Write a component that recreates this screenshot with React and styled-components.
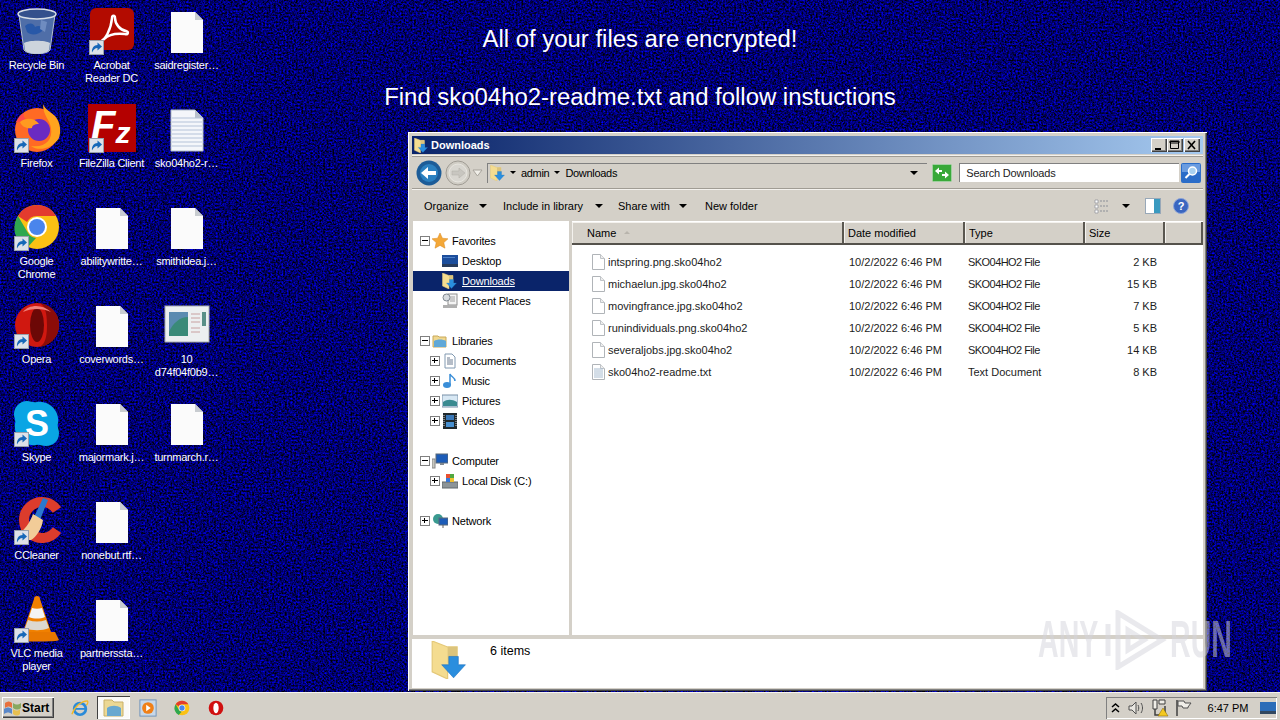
import React from 'react';
import styled, { createGlobalStyle } from 'styled-components';

const GlobalStyle = createGlobalStyle`
    html, body {
        margin: 0;
        padding: 0;
        width: 1280px;
        height: 720px;
        overflow: hidden;
        font-family: "Liberation Sans", Arial, sans-serif;
        font-size: 11px;
    }
    * { box-sizing: border-box; }
`;

const Screen = styled.div`
    width: 1280px;
    height: 720px;
    display: flex;
    flex-direction: column;
`;

const Desktop = styled.div`
    position: relative;
    height: 692px;
    background: #00006c;
    overflow: hidden;
`;

const Wallpaper = styled.svg`
    position: absolute;
    inset: 0;
`;

const IconGrid = styled.div`
    position: relative;
    margin-left: -1px;
    display: grid;
    grid-template-columns: repeat(3, 75px);
    grid-auto-rows: 98px;
`;

const Cell = styled.div`
    display: flex;
    flex-direction: column;
    align-items: center;
    padding-top: 6px;
`;

const IconBox = styled.div`
    position: relative;
    width: 48px;
    height: 48px;
    margin-bottom: 5px;
    svg { display: block; }
`;

const Badge = styled.div`
    position: absolute;
    left: 1px;
    bottom: -1px;
    width: 15px;
    height: 15px;
`;

const IconLabel = styled.div`
    width: 75px;
    color: #fff;
    text-align: center;
    line-height: 13px;
    letter-spacing: -0.25px;
    white-space: nowrap;
`;

const Banner = styled.div`
    position: absolute;
    top: 25px;
    left: 0;
    width: 1280px;
    color: #fff;
    font-size: 23.92px;
    line-height: 28px;
    text-align: center;
    display: flex;
    flex-direction: column;
    gap: 30px;
`;

const Window = styled.div`
    position: absolute;
    left: 408px;
    top: 132px;
    width: 799px;
    height: 559px;
    padding: 4px 4px 3px;
    display: flex;
    flex-direction: column;
    background: #d4d0c8;
    box-shadow: inset 1px 1px #fff, inset -1px -1px #404040, inset -2px -2px #808080;
`;

const TitleBar = styled.div`
    height: 18px;
    margin-bottom: 1px;
    padding: 0 3px 0 2px;
    display: flex;
    align-items: center;
    gap: 2px;
    color: #fff;
    font-weight: 700;
    background: linear-gradient(90deg, #0a246a, #a6caf0);
`;

const TitleText = styled.span`
    flex: 1;
`;

const CaptionBtn = styled.div`
    width: 16px;
    height: 14px;
    margin-left: ${p => p.$gap || 0}px;
    background: #d4d0c8;
    box-shadow: inset 1px 1px #fff, inset -1px -1px #404040, inset -2px -2px #808080;
    svg { display: block; }
`;

const NavBar = styled.div`
    height: 35px;
    padding: 0 2px 0 4px;
    display: flex;
    align-items: center;
    border-top: 1px solid #f4f2ee;
    border-bottom: 1px solid #f4f2ee;
    box-shadow: 0 1px #a09c94 inset, 0 -1px #a09c94 inset;
    background: #d4d0c8;
`;

const AddressBox = styled.div`
    width: 441px;
    height: 20px;
    margin-left: 4px;
    padding: 0 4px 1px 2px;
    display: flex;
    align-items: center;
    border-top: 1px solid #808080;
    border-left: 1px solid #808080;
    color: #000;
    letter-spacing: -0.3px;
`;

const Gap = styled.div`
    width: ${p => p.$w}px;
    flex: none;
`;

const SearchBox = styled.div`
    width: 220px;
    height: 19px;
    margin-left: 7px;
    padding-left: 6px;
    display: flex;
    align-items: center;
    background: #fff;
    color: #222;
    letter-spacing: -0.2px;
    border-top: 1px solid #808080;
    border-left: 1px solid #808080;
`;

const Toolbar = styled.div`
    height: 31px;
    padding-left: 12px;
    display: flex;
    align-items: center;
    color: #000;
`;

const ToolBtn = styled.div`
    width: ${p => p.$w}px;
    flex: none;
    display: flex;
    align-items: center;
    gap: ${p => p.$gap || 0}px;
`;

const Spacer = styled.div`
    flex: 1;
`;

const Arrow = styled.span`
    display: inline-block;
    width: 0;
    height: 0;
    flex: none;
    border-left: ${p => p.$s || 4}px solid transparent;
    border-right: ${p => p.$s || 4}px solid transparent;
    border-top: ${p => p.$s || 4}px solid #000;
`;

const Panes = styled.div`
    height: 414px;
    display: flex;
`;

const Sidebar = styled.div`
    width: 157px;
    margin-left: 1px;
    padding-top: 10px;
    background: #fff;
`;

const TreeRow = styled.div`
    height: 20px;
    padding-left: ${p => (p.$level ? 17 : 7)}px;
    display: flex;
    align-items: center;
    letter-spacing: -0.18px;
    color: ${p => (p.$selected ? '#fff' : '#000')};
    background: ${p => (p.$selected ? '#0a246a' : 'transparent')};
    span.label { text-decoration: ${p => (p.$selected ? 'underline' : 'none')}; }
    svg { margin: 0 4px 0 2px; flex: none; }
`;

const Expander = styled.div`
    position: relative;
    width: 10px;
    height: 10px;
    flex: none;
    ${p => !p.$empty && `
        background: #fff;
        border: 1px solid #808080;
        &::before {
            content: "";
            position: absolute;
            left: 1px;
            top: 3px;
            width: 6px;
            height: 1px;
            background: #000;
        }
    `}
    ${p => p.$plus && `
        &::after {
            content: "";
            position: absolute;
            left: 3px;
            top: 1px;
            width: 1px;
            height: 5px;
            background: #000;
        }
    `}
`;

const TreeGap = styled.div`
    height: 20px;
`;

const Splitter = styled.div`
    width: 3px;
    background: #d4d0c8;
`;

const ListPane = styled.div`
    flex: 1;
    background: #fff;
    color: #1c1c1c;
`;

const HeaderRow = styled.div`
    height: 23px;
    margin-top: 1px;
    display: flex;
    color: #000;
    border-bottom: 2px solid #55524c;
`;

const HeaderCell = styled.div`
    width: ${p => p.$w}px;
    flex: none;
    padding-left: ${p => p.$pad || 4}px;
    display: flex;
    align-items: center;
    background: #d4d0c8;
    border-right: 2px solid #5a5750;
    box-shadow: inset 1px 1px #f4f2ee;
`;

const SortMark = styled.span`
    width: 0;
    height: 0;
    margin-left: 8px;
    border-left: 3px solid transparent;
    border-right: 3px solid transparent;
    border-bottom: 3px solid #b8b4ac;
`;

const FileList = styled.div`
    padding-top: 6px;
`;

const FileRow = styled.div`
    height: 22px;
    padding-left: 20px;
    display: grid;
    grid-template-columns: 16px 241px 119px 120px 69px;
    align-items: center;
`;

const TypeCell = styled.div`
    letter-spacing: ${p => (p.$caps ? '-0.55px' : '0')};
`;

const SizeCell = styled.div`
    text-align: right;
`;

const HSplit = styled.div`
    height: 4px;
    background: #d4d0c8;
`;

const DetailsPane = styled.div`
    height: 49px;
    padding: 2px 0 0 19px;
    display: flex;
    background: #fff;
    color: #000;
`;

const ItemCount = styled.div`
    margin: 3px 0 0 21px;
    font-size: 12.5px;
`;

const Watermark = styled.div`
    position: absolute;
    left: 1038px;
    top: 610px;
    width: 194px;
    height: 60px;
    display: flex;
    align-items: center;
    justify-content: space-between;
    pointer-events: none;
`;

const MarkText = styled.span`
    display: block;
    width: 62px;
    font-size: 51px;
    font-weight: 700;
    line-height: 60px;
    color: rgba(212, 212, 220, 0.5);
    transform: scaleX(0.56);
    transform-origin: 0 50%;
    white-space: nowrap;
`;

const Taskbar = styled.div`
    height: 28px;
    padding: 4px 3px 2px 2px;
    display: flex;
    align-items: center;
    background: #d4d0c8;
    border-top: 1px solid #f4f2ee;
`;

const StartBtn = styled.div`
    width: 52px;
    height: 21px;
    padding-left: 2px;
    display: flex;
    align-items: center;
    color: #000;
    font-size: 12px;
    font-weight: 700;
    box-shadow: inset 1px 1px #fff, inset -1px -1px #404040, inset -2px -2px #808080;
`;

const QuickLaunch = styled.div`
    margin-left: 9px;
    display: flex;
    align-items: center;
    gap: 1px;
`;

const QuickBtn = styled.div`
    width: 33px;
    height: 23px;
    display: flex;
    align-items: center;
    justify-content: center;
    ${p => p.$active && `
        background: #fbfaf8;
        box-shadow: inset 1px 1px #404040, inset -1px -1px #fff;
    `}
`;

const Tray = styled.div`
    margin-left: auto;
    width: 171px;
    height: 22px;
    padding-right: 1px;
    display: flex;
    align-items: center;
    box-shadow: inset 1px 1px #808080, inset -1px -1px #fff;
    color: #000;
`;

const TrayTime = styled.div`
    margin-left: 4px;
    width: 56px;
    text-align: center;
`;

const TraySlot = styled.div`
    width: ${p => p.$w || 24}px;
    display: flex;
    justify-content: center;
`;

// ---- drawings ----

const Shortcut = () => (
    <Badge>
        <svg width="15" height="15" viewBox="0 0 15 15">
            <rect x="0.5" y="0.5" width="14" height="14" fill="#dde1e8" stroke="#98a0ac" />
            <path d="M3 12.500c-.5-4.500 2-7.500 5.500-7.500V2.500l4.500 4-4.500 4V8c-2.500 0-4 1.500-5.500 4.500z" fill="#1668b8" />
        </svg>
    </Badge>
);

const Bin = () => (
    <svg width="48" height="48" viewBox="0 0 48 48">
        <path d="M6 9l5 35c3 5 23 5 26 0l5-35z" fill="#4f6ea8" stroke="#b4c0d0" />
        <ellipse cx="24" cy="8" rx="19" ry="5" fill="#34508c" stroke="#d8dee6" strokeWidth="1.500" />
        <path d="M12 20c4-4 9-3 10 1 3-2 8-1 8 3-4 5-12 6-16 2z" fill="#2858a8" />
        <path d="M28 14l6 2-2 10-5-3z" fill="#6f8cc0" />
        <path d="M11 37c5-3 21-3 26 0l-1 7c-3 5-21 5-24 0z" fill="#cdd4dc" />
    </svg>
);

const Acrobat = () => (
    <svg width="48" height="48" viewBox="0 0 48 48">
        <rect x="2" y="2" width="44" height="42" rx="6" fill="#b30b00" />
        <path d="M12 36c5-2 11-12 12-24 0-3 3-3 3 0 0 6 5 12 11 13 3 1 2 4-1 3-9-1-16 0-21 5-3 3-6 4-4 3z" fill="none" stroke="#fff" strokeWidth="2.500" />
    </svg>
);

const Firefox = () => (
    <svg width="48" height="48" viewBox="0 0 48 48">
        <circle cx="24" cy="26" r="22" fill="#ff6a24" />
        <path d="M30 0c2 5 6 7 12 12 6 7 6 16 4 22-6 10-20 14-28 8 14 2 22-6 20-18-1-8-8-12-8-24z" fill="#ffa41e" />
        <path d="M3 18c2-5 5-8 8-9-1 3 0 5 2 6-4 2-6 4-10 3z" fill="#ff4a4a" />
        <circle cx="26" cy="26" r="11" fill="#6a2ac2" />
        <path d="M7 18c6-5 15-4 19 2-5 0-7 2-7 4-5 1-10-1-12-6z" fill="#ff9a20" />
    </svg>
);

const FileZilla = () => (
    <svg width="48" height="48" viewBox="0 0 48 48">
        <rect x="0" y="0" width="48" height="48" fill="#b40000" />
        <text x="3" y="35" fontFamily="Liberation Sans" fontWeight="700" fontStyle="italic" fontSize="40" fill="#fff">F<tspan dy="4" fontSize="30">z</tspan></text>
    </svg>
);

const Chrome = () => (
    <svg width="48" height="48" viewBox="0 -2 48 48">
        <circle cx="24" cy="23" r="22" fill="#fbc114" />
        <path d="M24 1a22 22 0 0 1 19 11H24a11 11 0 0 0-10 6L5 12A22 22 0 0 1 24 1z" fill="#e33b2e" />
        <path d="M5 12l10 17a11 11 0 0 0 8 5L14 44A22 22 0 0 1 5 12z" fill="#2fa84f" />
        <circle cx="24" cy="23" r="10" fill="#fff" />
        <circle cx="24" cy="23" r="8" fill="#4a85ec" />
    </svg>
);

const Opera = () => (
    <svg width="48" height="48" viewBox="0 -2 48 48">
        <circle cx="24" cy="23" r="22" fill="#d01810" />
        <path d="M24 1a22 22 0 0 1 0 44c8 0 10-10 10-22S32 1 24 1z" fill="#8c0c08" />
        <ellipse cx="24" cy="23" rx="7" ry="17" fill="#6c0806" />
        <path d="M10 10c6-8 20-8 28 0-8-4-20-4-28 0z" fill="#f08078" />
    </svg>
);

const Skype = () => (
    <svg width="48" height="48" viewBox="0 -2 48 48">
        <path d="M14 1c4 0 6 2 10 1 12-2 23 9 21 21-1 4 1 6 1 10 0 8-6 13-13 13-4 0-6-2-10-1C11 47 0 36 2 24c1-4-1-6-1-10C1 7 7 1 14 1z" fill="#09a5e4" />
        <text x="24" y="36" textAnchor="middle" fontFamily="Liberation Sans" fontWeight="700" fontSize="36" fill="#fff">S</text>
    </svg>
);

const CCleaner = () => (
    <svg width="48" height="48" viewBox="0 -2 48 48">
        <path d="M44 12A18 18 0 1 0 44 32" fill="none" stroke="#dc3c2c" strokeWidth="10" />
        <path d="M30 0l5 2-8 20-6-3z" fill="#2a78d0" />
        <path d="M20 16l10 6c-1 9-7 17-12 20-5 0-10-2-12-6 5-4 11-11 14-20z" fill="#f2cc98" />
    </svg>
);

const Vlc = () => (
    <svg width="48" height="48" viewBox="0 -2 48 48">
        <path d="M24 0c2 0 3 1 3 3l12 36H9L21 3c0-2 1-3 3-3z" fill="#f08000" />
        <path d="M19 12c3 1 7 1 10 0l3 9c-5 2-11 2-16 0z" fill="#f4f4f4" />
        <path d="M15 24c6 2 12 2 18 0l3 8c-7 3-17 3-24 0z" fill="#dcd8d0" />
        <path d="M6 36h36l4 8c0 2-44 2-44 0z" fill="#e87800" />
    </svg>
);

const Doc = () => (
    <svg width="48" height="48" viewBox="0 0 48 48">
        <path d="M8 6h24l8 8v33H8z" fill="#fbfbfb" />
        <path d="M32 6l8 8h-8z" fill="#c8ccd0" />
    </svg>
);

const TextDoc = () => (
    <svg width="48" height="48" viewBox="0 0 48 48">
        <path d="M8 6h24l8 8v33H8z" fill="#f4f6fa" stroke="#b0bccc" />
        <path d="M32 6l8 8h-8z" fill="#b8c0cc" />
        {[14, 18, 22, 26, 30, 34, 38, 42].map(y => (
            <path key={y} d={`M9 ${y}h30`} stroke="#b4c2d8" />
        ))}
    </svg>
);

const Thumb = () => (
    <svg width="48" height="48" viewBox="0 0 48 48">
        <rect x="2" y="6" width="44" height="36" fill="#eceff0" stroke="#a8acb0" />
        <rect x="6" y="12" width="19" height="24" fill="#3a8a78" />
        <path d="M6 12h19v5c-8 0-15 6-19 15z" fill="#5a8ab0" />
        <path d="M28 14h9M28 18h9M28 22h9M28 28h9M28 32h9" stroke="#c8a0a0" />
        <rect x="39" y="12" width="4" height="14" fill="#5a9088" />
    </svg>
);

const FolderDown = ({ size = 16 }) => (
    <svg width={size} height={size} viewBox="0 0 32 32">
        <path d="M1 0l13 5 8 0v18l-8 1v8L1 26z" fill="#f4dc90" stroke="#e4c878" />
        <path d="M14 5l8 0v14H14z" fill="#dcc47c" />
        <path d="M15 13h8v7h6L19 31 9 20h6z" fill="#2a8ede" stroke="#1870c0" strokeWidth="0.500" />
    </svg>
);

const FolderLib = () => (
    <svg width="16" height="16" viewBox="0 0 16 16">
        <path d="M1 3h5l1 1h7v10H1z" fill="#f0d890" stroke="#c8a858" />
        <path d="M2 8c3-2 9-2 12 0v6H2z" fill="#60a8d8" />
    </svg>
);

const Star = () => (
    <svg width="16" height="16" viewBox="0 0 16 16">
        <path d="M8 0l2.400 5.200 5.600.6-4.200 3.800 1.200 5.600L8 12.400 3 15.200l1.200-5.600L0 5.800l5.600-.6z" fill="#f4a838" stroke="#d88820" strokeWidth="0.500" />
    </svg>
);

const DesktopGlyph = () => (
    <svg width="16" height="16" viewBox="0 0 16 16">
        <rect x="0" y="2" width="16" height="12" fill="#1c4e9c" />
        <path d="M0 11h16v3H0z" fill="#283c5c" />
        <path d="M1 4h12v1H1z" fill="#4c80c8" />
    </svg>
);

const Recent = () => (
    <svg width="16" height="16" viewBox="0 0 16 16">
        <rect x="6" y="1" width="9" height="11" fill="#f4f4f4" stroke="#909090" />
        <circle cx="4.500" cy="4.500" r="3.500" fill="#d8dce0" stroke="#808890" />
        <path d="M8 4h5M8 6h5M8 8h5" stroke="#a0a0a0" />
        <rect x="1" y="12" width="14" height="3" fill="#b0b0b0" />
    </svg>
);

const Documents = () => (
    <svg width="16" height="16" viewBox="0 0 16 16">
        <path d="M3 1h7l3 3v11H3z" fill="#fff" stroke="#8098b0" />
        <path d="M5 5h3M5 7h6M5 9h6M5 11h6" stroke="#6a7a90" />
    </svg>
);

const Music = () => (
    <svg width="16" height="16" viewBox="0 0 16 16">
        <ellipse cx="5" cy="12" rx="4" ry="3" fill="#3a8ed8" />
        <path d="M8 12V1c1 3 5 3 5 7" fill="none" stroke="#3a8ed8" strokeWidth="1.500" />
    </svg>
);

const Pictures = () => (
    <svg width="16" height="16" viewBox="0 0 16 16">
        <rect x="0" y="2" width="16" height="12" fill="#d8e8f4" stroke="#7890a8" />
        <path d="M1 9c4-3 9-3 14 0v4H1z" fill="#3a8a90" />
    </svg>
);

const Videos = () => (
    <svg width="16" height="16" viewBox="0 0 16 16">
        <rect x="1" y="0" width="14" height="16" fill="#20282c" />
        <rect x="4" y="2" width="8" height="5" fill="#3a78b8" />
        <rect x="4" y="9" width="8" height="5" fill="#4890d0" />
        <path d="M2 2v12M14 2v12" stroke="#d8d8d8" strokeDasharray="1 1" />
    </svg>
);

const ComputerGlyph = () => (
    <svg width="16" height="16" viewBox="0 0 16 16">
        <rect x="4" y="1" width="12" height="9" fill="#1c5cb8" stroke="#586878" />
        <path d="M8 10h4v2H8z" fill="#808890" />
        <rect x="0" y="6" width="3" height="9" fill="#c8c8c0" stroke="#888" />
    </svg>
);

const DiskGlyph = () => (
    <svg width="16" height="16" viewBox="0 0 16 16">
        <rect x="0" y="9" width="16" height="6" fill="#8c9498" stroke="#60686c" />
        <rect x="4" y="1" width="4" height="4" fill="#e85030" />
        <rect x="8" y="1" width="4" height="4" fill="#50a840" />
        <rect x="4" y="5" width="4" height="4" fill="#3878d8" />
        <rect x="8" y="5" width="4" height="4" fill="#f0c030" />
    </svg>
);

const NetworkGlyph = () => (
    <svg width="16" height="16" viewBox="0 0 16 16">
        <circle cx="6" cy="6" r="5" fill="#3a9a90" />
        <rect x="7" y="5" width="9" height="7" fill="#1c5cb8" stroke="#586878" />
        <path d="M11 12v3" stroke="#606060" />
    </svg>
);

const SmallFile = ({ text }) => (
    <svg width="13" height="16" viewBox="0 0 13 16">
        <path d="M.5 .5h8l4 4v11H.5z" fill="#fff" stroke="#b0b4b8" />
        <path d="M8.500 .5v4h4" fill="#eee" stroke="#c0c4c8" />
        {text && <path d="M2 5h9M2 7h9M2 9h9M2 11h9M2 13h9" stroke="#a8bcd0" />}
    </svg>
);

const BackBtn = () => (
    <svg width="26" height="26" viewBox="0 0 26 26">
        <circle cx="13" cy="13" r="12.500" fill="#1c5c98" />
        <circle cx="13" cy="13" r="9" fill="#2a80c0" />
        <path d="M5 13l7-6v4h8v4h-8v4z" fill="#fff" />
    </svg>
);

const ForwardBtn = () => (
    <svg width="26" height="26" viewBox="0 0 26 26">
        <circle cx="13" cy="13" r="12" fill="#cfccc4" stroke="#a09c94" />
        <circle cx="13" cy="13" r="9" fill="#d8d6d0" stroke="#e8e6e0" />
        <path d="M20 13l-6-5v3H7v4h7v3z" fill="#c8c6c0" stroke="#b0aea6" strokeWidth="0.500" />
    </svg>
);

const HistoryDrop = () => (
    <svg width="11" height="8" viewBox="0 0 11 8">
        <path d="M1 1h9L5.500 7z" fill="#f0eee8" stroke="#a8a49c" />
    </svg>
);

const Refresh = () => (
    <svg width="20" height="18" viewBox="0 0 20 18">
        <rect x="0.500" y="0.500" width="19" height="17" rx="1" fill="#38a838" stroke="#a0d0a0" />
        <path d="M3 7l4-3.500V6h3v2H7v2.500zM17 11l-4 3.500V12h-3v-2h3V7.500z" fill="#fff" />
    </svg>
);

const SearchBtn = () => (
    <svg width="20" height="20" viewBox="0 0 20 20">
        <rect x="0" y="0" width="20" height="20" rx="2" fill="#2a6cc8" />
        <rect x="1" y="1" width="18" height="8" fill="#6a9ce0" />
        <circle cx="11.500" cy="8" r="4" fill="#a8d0f0" stroke="#fff" strokeWidth="1.500" />
        <path d="M8.500 11l-4 4" stroke="#fff" strokeWidth="2" />
    </svg>
);

const ViewsGlyph = () => (
    <svg width="16" height="16" viewBox="0 0 16 16">
        <path d="M1 2h3v3H1zM1 7h3v3H1zM1 12h3v3H1z" fill="#fff" stroke="#8c9098" strokeWidth="0.700" />
        <path d="M6 3h9M6 8h9M6 13h9" stroke="#8c9098" strokeDasharray="2 1" />
    </svg>
);

const PreviewGlyph = () => (
    <svg width="16" height="16" viewBox="0 0 16 16">
        <rect x="0.500" y="0.500" width="15" height="15" fill="#fff" stroke="#98a8b8" />
        <rect x="9" y="1" width="6" height="14" fill="#3a9ac0" />
    </svg>
);

const HelpGlyph = () => (
    <svg width="16" height="16" viewBox="0 0 16 16">
        <circle cx="8" cy="8" r="7.500" fill="#3a66c0" stroke="#8ca4d8" />
        <text x="8" y="12" textAnchor="middle" fontFamily="Liberation Sans" fontWeight="700" fontSize="11" fill="#fff">?</text>
    </svg>
);

const WinFlag = () => (
    <svg width="18" height="16" viewBox="0 0 18 16">
        <path d="M1 3c3-2 5-2 7 0v5c-2-2-4-2-7 0z" fill="#e8703c" />
        <path d="M9 3c3 2 5 2 8 0v5c-3 2-5 2-8 0z" fill="#88a860" />
        <path d="M0 9c3-2 5-2 8 0v5c-3-2-5-2-8 0z" fill="#5a88c8" />
        <path d="M9 9c3 2 5 2 7 0v5c-2 2-4 2-7 0z" fill="#e8c050" />
    </svg>
);

const IEGlyph = () => (
    <svg width="18" height="18" viewBox="0 0 20 20">
        <circle cx="10" cy="11" r="6.500" fill="none" stroke="#2a8ad8" strokeWidth="3" />
        <path d="M4 11h12" stroke="#2a8ad8" strokeWidth="2" />
        <path d="M1 17C4 8 12 2 18 2c1 1 1 3-1 5" fill="none" stroke="#f0b828" strokeWidth="1.500" />
    </svg>
);

const ExplorerGlyph = () => (
    <svg width="22" height="18" viewBox="0 0 22 18">
        <path d="M1 1h8l2 2h9v14H1z" fill="#ecd894" stroke="#c8b068" />
        <path d="M4 9c4-3 10-3 14 0v8H4z" fill="#68a8d0" />
    </svg>
);

const MediaGlyph = () => (
    <svg width="18" height="18" viewBox="0 0 20 20">
        <rect x="1" y="1" width="18" height="18" fill="#c8d8e8" stroke="#6a90b8" />
        <circle cx="10" cy="10" r="6.500" fill="#f08018" />
        <path d="M8 6.500l5 3.500-5 3.500z" fill="#fff" />
    </svg>
);

const Speaker = () => (
    <svg width="18" height="16" viewBox="0 0 18 16">
        <path d="M2 6h3l4-4v12l-4-4H2z" fill="#e8e6e0" stroke="#505050" />
        <path d="M11 5c1 2 1 4 0 6M14 3c2 3 2 7 0 10" fill="none" stroke="#505050" />
    </svg>
);

const NetTray = () => (
    <svg width="18" height="18" viewBox="0 0 18 18">
        <path d="M2 1h4v9H2zM8 1h6v4H8z" fill="#f0eee8" stroke="#404040" />
        <path d="M4 10v6h10V7" fill="none" stroke="#404040" strokeWidth="1.500" />
        <path d="M12 9l5 8H7z" fill="#f4c820" stroke="#806000" strokeWidth="0.500" />
    </svg>
);

const FlagTray = () => (
    <svg width="18" height="18" viewBox="0 0 18 18">
        <path d="M2 1v16" stroke="#404040" strokeWidth="1.500" />
        <path d="M3 2h6l1 2h6l-3 4 0 1H8l-1-2H3z" fill="#f0eee8" stroke="#505050" />
    </svg>
);

const ShowDesktop = () => (
    <svg width="16" height="16" viewBox="0 0 16 16">
        <rect x="0" y="2" width="16" height="12" fill="#2a6cb8" />
        <path d="M0 11h16v3H0z" fill="#324860" />
    </svg>
);

const Play = () => (
    <svg width="66" height="60" viewBox="0 0 66 60">
        <path d="M6 14v32M16 3l44 27-44 27zM26 20l16 10-16 10z" fill="none" stroke="rgba(212,212,220,0.5)" strokeWidth="5" />
    </svg>
);

// ---- data ----

const desktopItems = [
    { label: ['Recycle Bin'], icon: <Bin /> },
    { label: ['Acrobat', 'Reader DC'], icon: <Acrobat />, link: true },
    { label: ['saidregister…'], icon: <Doc /> },
    { label: ['Firefox'], icon: <Firefox />, link: true },
    { label: ['FileZilla Client'], icon: <FileZilla />, link: true },
    { label: ['sko04ho2-r…'], icon: <TextDoc /> },
    { label: ['Google', 'Chrome'], icon: <Chrome />, link: true },
    { label: ['abilitywritte…'], icon: <Doc /> },
    { label: ['smithidea.j…'], icon: <Doc /> },
    { label: ['Opera'], icon: <Opera />, link: true },
    { label: ['coverwords…'], icon: <Doc /> },
    { label: ['10', 'd74f04f0b9…'], icon: <Thumb /> },
    { label: ['Skype'], icon: <Skype />, link: true },
    { label: ['majormark.j…'], icon: <Doc /> },
    { label: ['turnmarch.r…'], icon: <Doc /> },
    { label: ['CCleaner'], icon: <CCleaner />, link: true },
    { label: ['nonebut.rtf…'], icon: <Doc /> },
    null,
    { label: ['VLC media', 'player'], icon: <Vlc />, link: true },
    { label: ['partnerssta…'], icon: <Doc /> },
];

const tree = [
    { text: 'Favorites', icon: <Star />, exp: 'minus' },
    { text: 'Desktop', icon: <DesktopGlyph />, level: 1 },
    { text: 'Downloads', icon: <FolderDown />, level: 1, selected: true },
    { text: 'Recent Places', icon: <Recent />, level: 1 },
    null,
    { text: 'Libraries', icon: <FolderLib />, exp: 'minus' },
    { text: 'Documents', icon: <Documents />, level: 1, exp: 'plus' },
    { text: 'Music', icon: <Music />, level: 1, exp: 'plus' },
    { text: 'Pictures', icon: <Pictures />, level: 1, exp: 'plus' },
    { text: 'Videos', icon: <Videos />, level: 1, exp: 'plus' },
    null,
    { text: 'Computer', icon: <ComputerGlyph />, exp: 'minus' },
    { text: 'Local Disk (C:)', icon: <DiskGlyph />, level: 1, exp: 'plus' },
    null,
    { text: 'Network', icon: <NetworkGlyph />, exp: 'plus' },
];

const files = [
    { name: 'intspring.png.sko04ho2', type: 'SKO04HO2 File', size: '2 KB' },
    { name: 'michaelun.jpg.sko04ho2', type: 'SKO04HO2 File', size: '15 KB' },
    { name: 'movingfrance.jpg.sko04ho2', type: 'SKO04HO2 File', size: '7 KB' },
    { name: 'runindividuals.png.sko04ho2', type: 'SKO04HO2 File', size: '5 KB' },
    { name: 'severaljobs.jpg.sko04ho2', type: 'SKO04HO2 File', size: '14 KB' },
    { name: 'sko04ho2-readme.txt', type: 'Text Document', size: '8 KB', text: true },
];

const App = () => (
    <Screen>
        <GlobalStyle />
        <Desktop>
            <Wallpaper width="1280" height="692">
                <filter id="speckle" x="0" y="0" width="100%" height="100%" colorInterpolationFilters="sRGB">
                    <feTurbulence type="fractalNoise" baseFrequency="0.55" numOctaves="2" seed="4" />
                    <feColorMatrix values="0 0 0 0 0  0 0 0 0 0  0 0 1.7 0 -0.42  0 0 0 0 1" />
                </filter>
                <rect width="1280" height="692" filter="url(#speckle)" />
            </Wallpaper>

            <IconGrid>
                {desktopItems.map((item, i) => (
                    item ? (
                        <Cell key={i}>
                            <IconBox>
                                {item.icon}
                                {item.link && <Shortcut />}
                            </IconBox>
                            {item.label.map(line => <IconLabel key={line}>{line}</IconLabel>)}
                        </Cell>
                    ) : <Cell key={i} />
                ))}
            </IconGrid>

            <Banner>
                <div>All of your files are encrypted!</div>
                <div>Find sko04ho2-readme.txt and follow instuctions</div>
            </Banner>

            <Window>
                <TitleBar>
                    <FolderDown size={15} />
                    <TitleText>Downloads</TitleText>
                    <CaptionBtn>
                        <svg width="16" height="14"><path d="M4 10h6v2H4z" fill="#000" /></svg>
                    </CaptionBtn>
                    <CaptionBtn $gap={-2}>
                        <svg width="16" height="14"><path d="M3.500 3.500h8v7h-8zM3 3h9v2H3z" fill="none" stroke="#000" /></svg>
                    </CaptionBtn>
                    <CaptionBtn $gap={-1}>
                        <svg width="16" height="14"><path d="M4 3l7 8M11 3l-7 8" stroke="#000" strokeWidth="1.600" /></svg>
                    </CaptionBtn>
                </TitleBar>

                <NavBar>
                    <BackBtn />
                    <Gap $w={3} />
                    <ForwardBtn />
                    <Gap $w={1} />
                    <HistoryDrop />
                    <AddressBox>
                        <FolderDown />
                        <Gap $w={4} />
                        <Arrow $s={3} />
                        <Gap $w={5} />
                        <span>admin</span>
                        <Gap $w={5} />
                        <Arrow $s={3} />
                        <Gap $w={5} />
                        <span>Downloads</span>
                        <Spacer />
                        <Arrow $s={4} />
                        <Gap $w={5} />
                    </AddressBox>
                    <Gap $w={5} />
                    <Refresh />
                    <SearchBox>Search Downloads</SearchBox>
                    <Gap $w={2} />
                    <SearchBtn />
                </NavBar>

                <Toolbar>
                    <ToolBtn $w={79} $gap={10}>Organize <Arrow /></ToolBtn>
                    <ToolBtn $w={115} $gap={12}>Include in library <Arrow /></ToolBtn>
                    <ToolBtn $w={87} $gap={9}>Share with <Arrow /></ToolBtn>
                    <ToolBtn $w={60}>New folder</ToolBtn>
                    <Spacer />
                    <ViewsGlyph />
                    <Gap $w={12} />
                    <Arrow />
                    <Gap $w={15} />
                    <PreviewGlyph />
                    <Gap $w={12} />
                    <HelpGlyph />
                    <Gap $w={14} />
                </Toolbar>

                <Panes>
                    <Sidebar>
                        {tree.map((row, i) => (
                            row ? (
                                <TreeRow key={row.text} $level={row.level} $selected={row.selected}>
                                    <Expander $empty={!row.exp} $plus={row.exp === 'plus'} />
                                    {row.icon}
                                    <span className="label">{row.text}</span>
                                </TreeRow>
                            ) : <TreeGap key={i} />
                        ))}
                    </Sidebar>
                    <Splitter />
                    <ListPane>
                        <HeaderRow>
                            <HeaderCell $w={272} $pad={15}>Name <SortMark /></HeaderCell>
                            <HeaderCell $w={121}>Date modified</HeaderCell>
                            <HeaderCell $w={120}>Type</HeaderCell>
                            <HeaderCell $w={80}>Size</HeaderCell>
                            <HeaderCell $w={38} />
                        </HeaderRow>
                        <FileList>
                            {files.map(f => (
                                <FileRow key={f.name}>
                                    <SmallFile text={f.text} />
                                    <div>{f.name}</div>
                                    <div>10/2/2022 6:46 PM</div>
                                    <TypeCell $caps={!f.text}>{f.type}</TypeCell>
                                    <SizeCell>{f.size}</SizeCell>
                                </FileRow>
                            ))}
                        </FileList>
                    </ListPane>
                </Panes>

                <HSplit />

                <DetailsPane>
                    <FolderDown size={38} />
                    <ItemCount>6 items</ItemCount>
                </DetailsPane>
            </Window>

            <Watermark>
                <MarkText>ANY</MarkText>
                <Play />
                <MarkText>RUN</MarkText>
            </Watermark>
        </Desktop>

        <Taskbar>
            <StartBtn><WinFlag />Start</StartBtn>
            <QuickLaunch>
                <QuickBtn><IEGlyph /></QuickBtn>
                <QuickBtn $active><ExplorerGlyph /></QuickBtn>
                <QuickBtn><MediaGlyph /></QuickBtn>
                <QuickBtn>
                    <svg width="16" height="16" viewBox="0 0 48 46"><circle cx="24" cy="23" r="22" fill="#fbc114" /><path d="M24 1a22 22 0 0 1 19 11H24a11 11 0 0 0-10 6L5 12A22 22 0 0 1 24 1z" fill="#e33b2e" /><path d="M5 12l10 17a11 11 0 0 0 8 5L14 44A22 22 0 0 1 5 12z" fill="#2fa84f" /><circle cx="24" cy="23" r="10" fill="#fff" /><circle cx="24" cy="23" r="8" fill="#4a85ec" /></svg>
                </QuickBtn>
                <QuickBtn>
                    <svg width="16" height="16" viewBox="0 0 48 46"><circle cx="24" cy="23" r="22" fill="#d01010" /><ellipse cx="24" cy="23" rx="8" ry="16" fill="#fff" /></svg>
                </QuickBtn>
            </QuickLaunch>
            <Tray>
                <TraySlot $w={18}>
                    <svg width="9" height="10" viewBox="0 0 9 10"><path d="M1 4l3.500-3L8 4M1 9l3.500-3L8 9" fill="none" stroke="#000" strokeWidth="1.500" /></svg>
                </TraySlot>
                <TraySlot><Speaker /></TraySlot>
                <TraySlot><NetTray /></TraySlot>
                <TraySlot><FlagTray /></TraySlot>
                <TrayTime>6:47 PM</TrayTime>
                <Spacer />
                <ShowDesktop />
            </Tray>
        </Taskbar>
    </Screen>
);

export default App;
